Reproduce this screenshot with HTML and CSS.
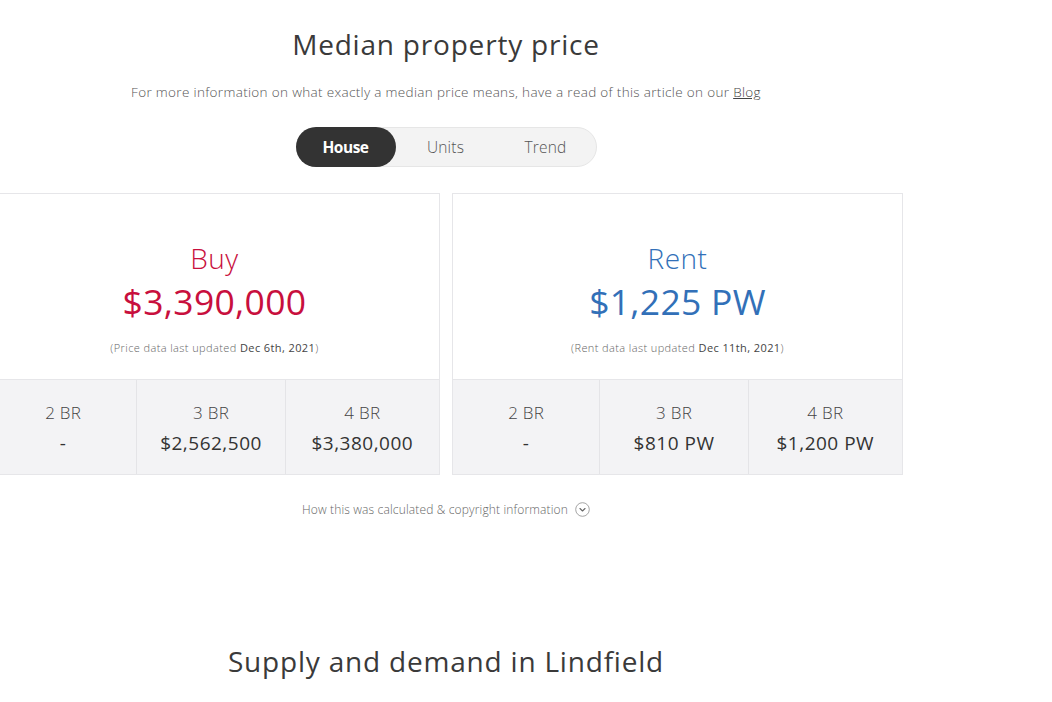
FILE: index.html
```html
<!DOCTYPE html>
<html>
<head>
<meta charset="utf-8">
<link rel="stylesheet" href="styles.css">
</head>
<body>
<main class="page">
  <section class="median">
    <h2 class="title">Median property price</h2>
    <p class="intro">For more information on what exactly a median price means, have a read of this article on our <a href="#" class="link">Blog</a></p>
    <div class="toggle">
      <span class="tab active">House</span>
      <span class="tab">Units</span>
      <span class="tab">Trend</span>
    </div>
    <div class="cards">
      <div class="card">
        <div class="card-top">
          <div class="label buy">Buy</div>
          <div class="price buy">$3,390,000</div>
          <div class="updated">(Price data last updated <b>Dec 6th, 2021</b>)</div>
        </div>
        <div class="card-row">
          <div class="cell"><div class="br">2 BR</div><div class="val">-</div></div>
          <div class="cell"><div class="br">3 BR</div><div class="val">$2,562,500</div></div>
          <div class="cell"><div class="br">4 BR</div><div class="val">$3,380,000</div></div>
        </div>
      </div>
      <div class="card">
        <div class="card-top">
          <div class="label rent">Rent</div>
          <div class="price rent">$1,225 PW</div>
          <div class="updated">(Rent data last updated <b>Dec 11th, 2021</b>)</div>
        </div>
        <div class="card-row">
          <div class="cell"><div class="br">2 BR</div><div class="val">-</div></div>
          <div class="cell"><div class="br">3 BR</div><div class="val">$810 PW</div></div>
          <div class="cell"><div class="br">4 BR</div><div class="val">$1,200 PW</div></div>
        </div>
      </div>
    </div>
    <div class="howto">
      <span>How this was calculated &amp; copyright information</span>
      <svg class="chev" width="15" height="15" viewBox="0 0 15 15"><circle cx="7.5" cy="7.5" r="6.8" fill="none" stroke="#9a9a9a" stroke-width="0.9"/><path d="M5 6.5 L7.5 9 L10 6.5" fill="none" stroke="#666" stroke-width="1.1" stroke-linecap="round" stroke-linejoin="round"/></svg>
    </div>
  </section>
  <section class="supply">
    <h2 class="title">Supply and demand in Lindfield</h2>
  </section>
</main>
</body>
</html>
```

FILE: styles.css
```css
* { box-sizing: border-box; }
html, body { margin: 0; padding: 0; background: #fff; }
body {
  font-family: "Open Sans", Lato, "Liberation Sans", sans-serif;
  color: #3b3b3b;
  overflow: hidden;
}
.page {
  width: 914px;
  margin-left: -11px;
}
.median {
  display: flex;
  flex-direction: column;
  align-items: center;
  padding-top: 26px;
}
.title {
  margin: 0;
  font-size: 28px;
  font-weight: 400;
  line-height: 36px;
  color: #3a3a3a;
  letter-spacing: 0.8px;
}
.intro {
  margin: 21px 0 0;
  font-size: 13.5px;
  line-height: 18px;
  color: #555;
  font-weight: 300;
  letter-spacing: 0.33px;
}
.link { color: #444; text-decoration: underline; }
.toggle {
  margin-top: 26px;
  display: flex;
  width: 301px;
  height: 40px;
  background: #f3f3f3;
  border: 1px solid #e6e6e6;
  border-radius: 20px;
}
.tab {
  flex: 1;
  display: flex;
  align-items: center;
  justify-content: center;
  font-size: 15.5px;
  color: #555;
  font-weight: 300;
  border-radius: 20px;
  letter-spacing: 0.2px;
}
.tab.active {
  background: #333;
  color: #fff;
  font-weight: 700;
  margin: -1px 0 -1px -1px;
  letter-spacing: -0.5px;
}
.cards {
  margin-top: 26px;
  width: 100%;
  display: grid;
  grid-template-columns: 1fr 1fr;
  gap: 12px;
}
.card {
  border: 1px solid #e6e6e9;
  background: #fff;
}
.card-top {
  height: 185px;
  display: flex;
  flex-direction: column;
  align-items: center;
  padding-top: 47px;
}
.label {
  font-size: 28px;
  line-height: 34px;
  font-weight: 300;
  letter-spacing: 0.5px;
}
.price {
  font-size: 35.5px;
  line-height: 44px;
  font-weight: 400;
  margin-top: 4px;
  letter-spacing: 0.3px;
}
.buy { color: #c80f3d; }
.rent { color: #3270b8; }
.updated {
  margin-top: 17px;
  font-size: 11px;
  color: #666;
  font-weight: 300;
  letter-spacing: 0.4px;
}
.updated b { font-weight: 400; color: #444; }
.card-row {
  display: grid;
  grid-template-columns: 147fr 149fr 155fr;
  background: #f3f3f5;
  border-top: 1px solid #e6e6e9;
  height: 95px;
}
.cell {
  display: flex;
  flex-direction: column;
  align-items: center;
  padding-top: 22px;
  border-left: 1px solid #e4e4e7;
}
.cell:first-child { border-left: none; }
.br {
  font-size: 17px;
  line-height: 22px;
  font-weight: 300;
  color: #444;
  letter-spacing: 0.3px;
}
.val {
  margin-top: 7px;
  font-size: 19px;
  line-height: 24px;
  font-weight: 400;
  color: #333;
  letter-spacing: 0.5px;
}
.howto {
  margin-top: 26px;
  display: flex;
  align-items: center;
  gap: 7px;
  font-size: 12px;
  color: #666;
  font-weight: 300;
  letter-spacing: 0.15px;
}
.chev { display: block; }
.supply {
  display: flex;
  justify-content: center;
  padding-top: 125px;
}
```
